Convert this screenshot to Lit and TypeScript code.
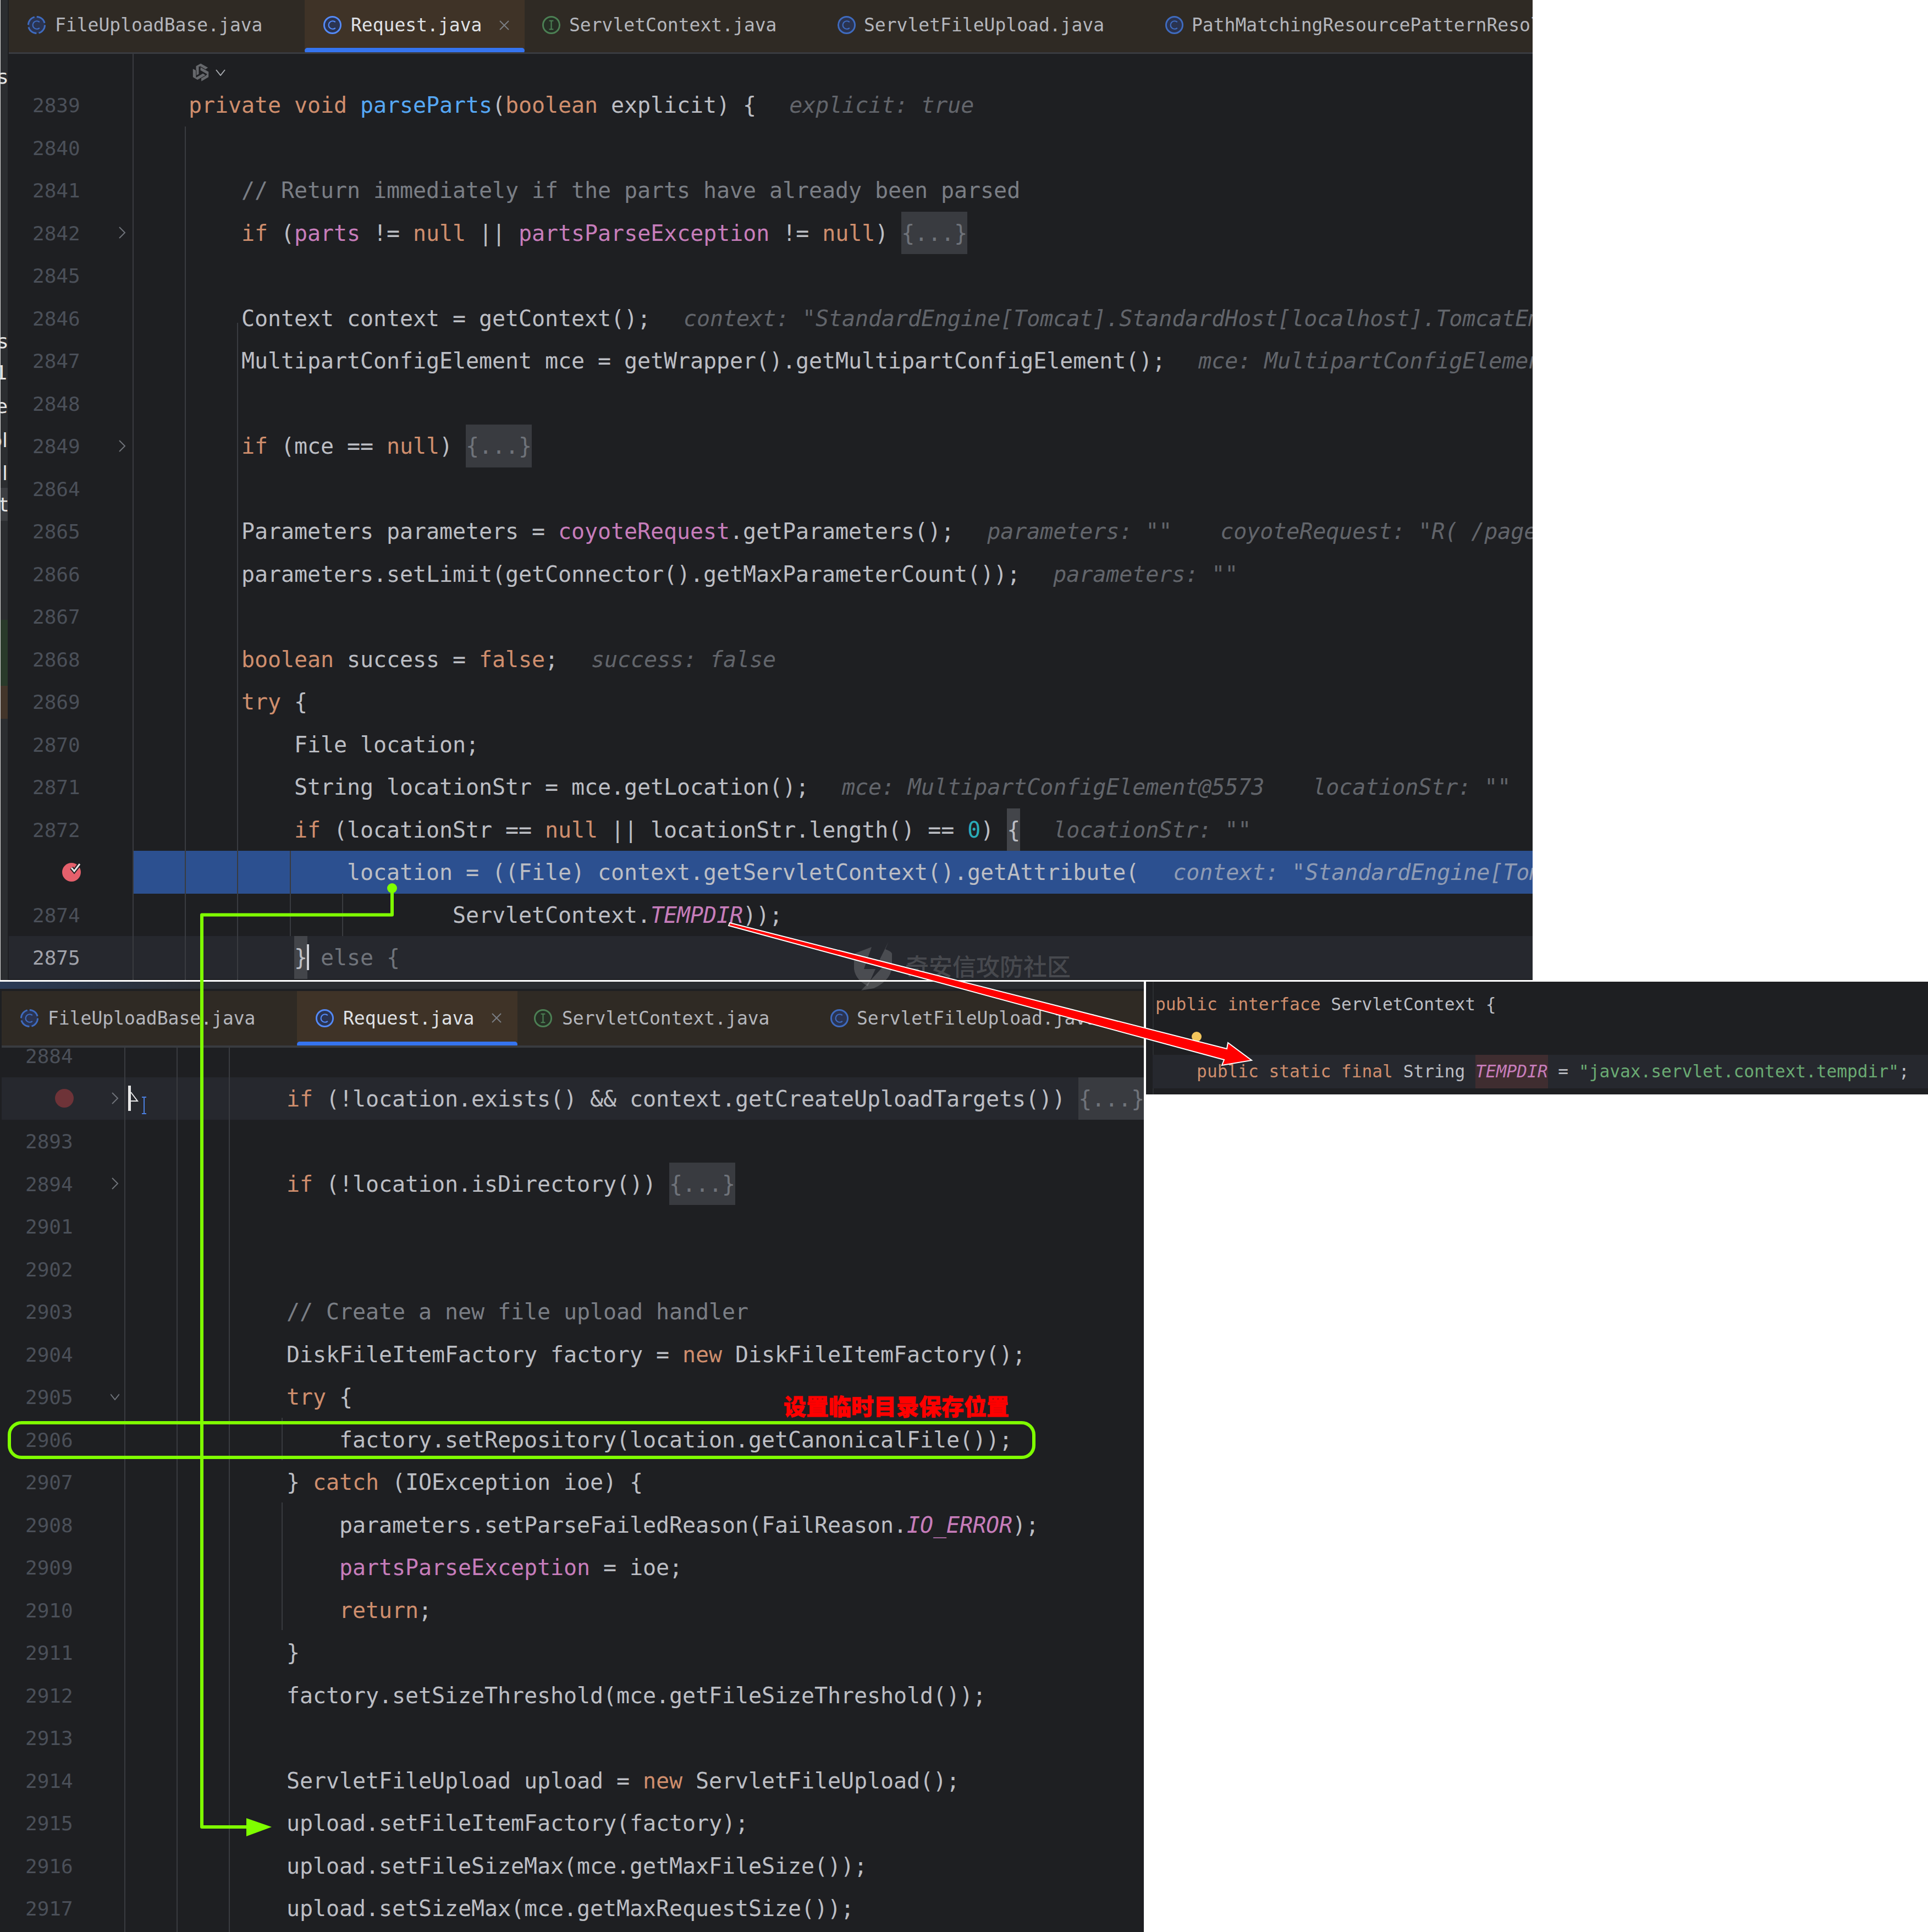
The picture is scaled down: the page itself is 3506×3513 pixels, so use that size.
import { LitElement, html, css, svg } from "lit";
import { customElement } from "lit/decorators.js";

type Seg = [string, string];
interface Row { n?: string; fold?: "r" | "d"; kind?: "sel" | "cur"; bp?: "on" | "off"; segs?: Seg[]; }
interface Guide { x: number; top: number; h: number; }

const t = (s: string): Seg => ["", s];
const k = (s: string): Seg => ["k", s];
const f = (s: string): Seg => ["f", s];
const h = (s: string): Seg => ["h", s];
const h2 = (s: string): Seg => ["h h2", s];
const c = (s: string): Seg => ["c", s];
const fo = (): Seg => ["fo", "{...}"];

const TOP: Row[] = [
  { n: "2839", segs: [k("private void "), ["m", "parseParts"], t("("), k("boolean"), t(" explicit) {"), h("explicit: true")] },
  { n: "2840" },
  { n: "2841", segs: [c("    // Return immediately if the parts have already been parsed")] },
  { n: "2842", fold: "r", segs: [t("    "), k("if"), t(" ("), f("parts"), t(" != "), k("null"), t(" || "), f("partsParseException"), t(" != "), k("null"), t(") "), fo()] },
  { n: "2845" },
  { n: "2846", segs: [t("    Context context = getContext();"), h('context: "StandardEngine[Tomcat].StandardHost[localhost].TomcatEmbeddedContext[]"')] },
  { n: "2847", segs: [t("    MultipartConfigElement mce = getWrapper().getMultipartConfigElement();"), h("mce: MultipartConfigElement@5573")] },
  { n: "2848" },
  { n: "2849", fold: "r", segs: [t("    "), k("if"), t(" (mce == "), k("null"), t(") "), fo()] },
  { n: "2864" },
  { n: "2865", segs: [t("    Parameters parameters = "), f("coyoteRequest"), t(".getParameters();"), h('parameters: ""'), h2('coyoteRequest: "R( /page/upload )"')] },
  { n: "2866", segs: [t("    parameters.setLimit(getConnector().getMaxParameterCount());"), h('parameters: ""')] },
  { n: "2867" },
  { n: "2868", segs: [t("    "), k("boolean"), t(" success = "), k("false"), t(";"), h("success: false")] },
  { n: "2869", segs: [t("    "), k("try"), t(" {")] },
  { n: "2870", segs: [t("        File location;")] },
  { n: "2871", segs: [t("        String locationStr = mce.getLocation();"), h("mce: MultipartConfigElement@5573"), h2('locationStr: ""')] },
  { n: "2872", segs: [t("        "), k("if"), t(" (locationStr == "), k("null"), t(" || locationStr.length() == "), ["n", "0"], t(") "), ["br", "{"], h('locationStr: ""')] },
  { kind: "sel", bp: "on", segs: [t("            location = ((File) context.getServletContext().getAttribute("), ["h hs", 'context: "StandardEngine[Tomcat].StandardHost[localhost]"']] },
  { n: "2874", segs: [t("                    ServletContext."), ["fi", "TEMPDIR"], t("));")] },
  { n: "2875", kind: "cur", segs: [t("        "), ["br ca", "}"], ["dim", " else {"]] },
];

const BOTTOM: Row[] = [
  { n: "2884" },
  { kind: "cur", bp: "off", fold: "r", segs: [k("if"), t(" (!location.exists() && context.getCreateUploadTargets()) "), fo()] },
  { n: "2893" },
  { n: "2894", fold: "r", segs: [k("if"), t(" (!location.isDirectory()) "), fo()] },
  { n: "2901" },
  { n: "2902" },
  { n: "2903", segs: [c("// Create a new file upload handler")] },
  { n: "2904", segs: [t("DiskFileItemFactory factory = "), k("new"), t(" DiskFileItemFactory();")] },
  { n: "2905", fold: "d", segs: [k("try"), t(" {")] },
  { n: "2906", segs: [t("    factory.setRepository(location.getCanonicalFile());")] },
  { n: "2907", segs: [t("} "), k("catch"), t(" (IOException ioe) {")] },
  { n: "2908", segs: [t("    parameters.setParseFailedReason(FailReason."), ["fi", "IO_ERROR"], t(");")] },
  { n: "2909", segs: [t("    "), f("partsParseException"), t(" = ioe;")] },
  { n: "2910", segs: [t("    "), k("return"), t(";")] },
  { n: "2911", segs: [t("}")] },
  { n: "2912", segs: [t("factory.setSizeThreshold(mce.getFileSizeThreshold());")] },
  { n: "2913" },
  { n: "2914", segs: [t("ServletFileUpload upload = "), k("new"), t(" ServletFileUpload();")] },
  { n: "2915", segs: [t("upload.setFileItemFactory(factory);")] },
  { n: "2916", segs: [t("upload.setFileSizeMax(mce.getMaxFileSize());")] },
  { n: "2917", segs: [t("upload.setSizeMax(mce.getMaxRequestSize());")] },
];

const GUIDES_TOP: Guide[] = [
  { x: 241, top: 0, h: 1684 },
  { x: 336, top: 132, h: 1552 },
  { x: 431, top: 489, h: 1195 },
  { x: 527, top: 1449, h: 155 },
  { x: 622, top: 1526, h: 78 },
];
const GUIDES_BOTTOM: Guide[] = [
  { x: 226, top: 0, h: 1608 },
  { x: 321, top: 0, h: 1608 },
  { x: 416, top: 0, h: 1608 },
  { x: 512, top: 673, h: 77 },
  { x: 512, top: 827, h: 232 },
];

interface Tab { name: string; w: number; icon: "c" | "cd" | "i"; active?: boolean; pad: number; gap: number; }
const TABS_TOP: Tab[] = [
  { name: "FileUploadBase.java", w: 538, icon: "cd", pad: 33, gap: 16 },
  { name: "Request.java", w: 400, icon: "c", active: true, pad: 33, gap: 16 },
  { name: "ServletContext.java", w: 535, icon: "i", pad: 31, gap: 15 },
  { name: "ServletFileUpload.java", w: 596, icon: "c", pad: 33, gap: 14 },
  { name: "PathMatchingResourcePatternResolver.java", w: 1100, icon: "c", pad: 33, gap: 14 },
];
const TABS_BOTTOM: Tab[] = [
  { name: "FileUploadBase.java", w: 537, icon: "cd", pad: 33, gap: 16 },
  { name: "Request.java", w: 401, icon: "c", active: true, pad: 33, gap: 16 },
  { name: "ServletContext.java", w: 535, icon: "i", pad: 29, gap: 17 },
  { name: "ServletFileUpload.java", w: 700, icon: "c", pad: 33, gap: 14 },
];

const STRIP: { h: number; pre?: string; text?: string; cls?: string }[] = [
  { h: 121 }, { h: 36, text: "s" }, { h: 445 },
  { h: 36, text: "s" }, { h: 21 },
  { h: 36, pre: "o", text: "1" }, { h: 25 },
  { h: 36, text: "e" }, { h: 26 },
  { h: 36, text: "pl" }, { h: 24 },
  { h: 36, pre: "u", text: "l" }, { h: 9 },
  { h: 60, text: "st", cls: "hi" }, { h: 180 },
  { h: 120, cls: "gr" }, { h: 60, cls: "br" },
];

@customElement("app-root")
export class AppRoot extends LitElement {
  static styles = css`
    :host { display: block; position: relative; width: 3506px; height: 3513px; background: #fff; overflow: hidden; font-family: "DejaVu Sans Mono", "Liberation Mono", monospace; }
    .panel { background: #1e1f22; overflow: hidden; box-sizing: border-box; }
    .p1 { width: 2787px; height: 1782px; display: flex; }
    .lower { display: flex; gap: 4px; margin-top: 3px; align-items: flex-start; }
    .p2 { width: 2080px; height: 1728px; padding-left: 3px; display: flex; flex-direction: column; }
    .p3 { width: 1422px; height: 205px; padding-left: 12px; }

    .strip { width: 16px; height: 100%; flex: none; box-sizing: border-box; border-left: 1px solid #d8d8d8; padding-right: 2px; }
    .strip-in { background: #2b2d30; height: 100%; display: flex; flex-direction: column; overflow: hidden; }
    .si { flex: none; display: flex; justify-content: flex-end; align-items: center; font: 36px "DejaVu Sans", sans-serif; color: #e6e6e6; white-space: nowrap; overflow: hidden; }
    .si .pre { color: #cf8e6d; }
    .si.hi { background: #3c3e42; }
    .si.gr { background: #293a2a; }
    .si.br { background: #43352a; }

    .main { flex: 1; min-width: 0; display: flex; flex-direction: column; }
    .title { height: 17px; flex: none; box-sizing: border-box; border-bottom: 4px solid #1e1f22; background: linear-gradient(90deg, #2a3a55 0, #2b2d30 420px); margin-left: -3px; }
    .tabs { display: flex; flex: none; background: #2f2a24; box-sizing: border-box; overflow: hidden; }
    .p1 .tabs { height: 98px; border-bottom: 3px solid #393b40; }
    .p2 .tabs { height: 103px; border-bottom: 4px solid #393b40; }
    .tab { position: relative; flex: none; display: flex; align-items: center; box-sizing: border-box; font-size: 33px; color: #b4b6bc; white-space: pre; height: calc(100% + 4px); margin-bottom: -4px; }
    .p1 .tab { padding-bottom: 8px; }
    .p2 .tab { padding-bottom: 5px; }
    .tab.on { background: #3f3327; color: #dfe1e5; }
    .tab.on::after { content: ""; position: absolute; left: 0; right: 0; bottom: 2px; height: 10px; border-radius: 5px; background: #3574f0; }
    .p2 .tab.on::after { bottom: 1px; }
    .ti { width: 35px; height: 35px; flex: none; display: block; }
    .tx { width: 20px; height: 18px; flex: none; margin-left: 15px; display: block; }

    .body { position: relative; flex: 1; min-height: 0; overflow: hidden; }
    .p1 .head { height: 54px; box-sizing: border-box; padding-top: 14px; display: flex; align-items: center; padding-left: 331px; gap: 9px; }
    .head .cfg { width: 36px; height: 36px; display: block; }
    .head .chev { width: 18px; height: 12px; display: block; }
    .p2 .rows { margin-top: -24px; }
    .row { display: flex; height: 77.5px; }
    .row.cur { background: #26282e; }
    .gut { flex: none; display: flex; align-items: center; height: 100%; }
    .p1 .gut { width: 225px; }
    .p2 .gut { width: 223px; }
    .num { flex: none; width: 130px; box-sizing: border-box; padding-left: 43px; font-size: 36px; color: #4b5059; line-height: 79px; height: 77.5px; }
    .cur .num { color: #a1a3ab; }
    .bp { width: 130px; flex: none; padding-left: 96px; box-sizing: border-box; }
    .bp svg { display: block; width: 36px; height: 36px; }
    .chv { width: 16px; height: 24px; margin-left: 68px; display: block; flex: none; }
    .code { flex: 1; min-width: 0; white-space: pre; overflow: hidden; font-size: 40px; line-height: 79px; letter-spacing: -0.08px; color: #bcbec4; }
    .p1 .code { padding-left: 102px; }
    .p2 .code { padding-left: 295px; }
    .sel .code { background: #2c5090; margin-left: 1px; padding-left: 101px; }
    .k { color: #cf8e6d; }
    .m { color: #56a8f5; }
    .f { color: #c77dbb; }
    .fi { color: #c77dbb; font-style: italic; }
    .n { color: #2aacb8; }
    .c { color: #7a7e85; }
    .dim { color: #6f737a; }
    .h { color: #62656b; font-style: italic; margin-left: 60px; }
    .h2 { margin-left: 88px; }
    .hs { color: #8f9bb3; margin-left: 62px; }
    .fo { display: inline-block; background: #393b40; color: #6f737a; height: 77.5px; }
    .br { display: inline-block; background: #43454a; height: 77.5px; position: relative; }
    .ca::after { content: ""; position: absolute; right: -3px; top: 15px; height: 47px; width: 4px; background: #ced0d6; }
    .guide { position: absolute; width: 2px; background: #393b40; }

    .p3 .in { border-left: 2px solid #2b2d30; height: 100%; padding-top: 11px; box-sizing: border-box; font-size: 31.2px; line-height: 61px; color: #bcbec4; position: relative; }
    .p3 .ln { height: 61px; white-space: pre; padding-left: 5px; margin-left: -2px; }
    .p3 .ln.cur { background: #26282e; }
    .p3 .hl { display: inline-block; height: 61px; background: #3f2d30; color: #c77dbb; font-style: italic; }
    .p3 .s { color: #6aab73; }
    .bulb { position: absolute; left: 69px; top: 91px; width: 18px; height: 18px; border-radius: 50%; background: #f2c55c; }

    .wm { position: absolute; left: 1646px; top: 1727px; font: 500 43px/56px "Noto Sans CJK SC", sans-serif; color: rgba(255,255,255,.17); white-space: pre; }
    .note { position: absolute; left: 1425px; top: 2528px; font: 900 41px/54px "Noto Sans CJK SC", sans-serif; color: #f00; -webkit-text-stroke: 0.8px #f00; white-space: pre; }
    .over { position: absolute; left: 0; top: 0; width: 3506px; height: 3513px; display: block; pointer-events: none; }
  `;

  private tabIcon(kind: string, active?: boolean) {
    if (kind === "i") {
      return html`<svg class="ti" viewBox="0 0 36 36"><circle cx="18" cy="18" r="15.5" fill="#262e24" stroke="#4c8054" stroke-width="3"/><path d="M14 10h8M18 10v16M14 26h8" fill="none" stroke="#4c8054" stroke-width="2.2"/></svg>`;
    }
    const col = active ? "#548af7" : "#3f6bbf";
    const dash = kind === "cd" ? "20 4.3" : "none";
    return html`<svg class="ti" viewBox="0 0 36 36"><circle cx="18" cy="18" r="15.5" fill="#2a3350" stroke=${col} stroke-width="3" stroke-dasharray=${dash}/><path d="M23.5 12.5A7.5 7.5 0 1 0 23.5 23.5" fill="none" stroke=${col} stroke-width="2.2"/></svg>`;
  }

  private tabs(list: Tab[]) {
    return html`<div class="tabs">${list.map(
      (x) => html`<div class="tab ${x.active ? "on" : ""}" style="width:${x.w}px;padding-left:${x.pad}px;gap:${x.gap}px">
        ${this.tabIcon(x.icon, x.active)}<span>${x.name}</span>
        ${x.active ? html`<svg class="tx" viewBox="0 0 20 18"><path d="M2 1L18 17M18 1L2 17" stroke="#7a7e85" stroke-width="2" fill="none"/></svg>` : ""}
      </div>`
    )}</div>`;
  }

  private bp(state: "on" | "off") {
    if (state === "off") {
      return html`<div class="bp"><svg viewBox="0 0 36 36"><circle cx="18" cy="18" r="17" fill="#6e3338"/></svg></div>`;
    }
    return html`<div class="bp"><svg viewBox="0 0 36 36"><circle cx="18" cy="18" r="17" fill="#e5606c"/><path d="M18 10L23 16L33 3" fill="none" stroke="#1e1f22" stroke-width="7"/><path d="M18 10L23 16L33 3" fill="none" stroke="#e8e8e8" stroke-width="3"/></svg></div>`;
  }

  private row(r: Row) {
    return html`<div class="row ${r.kind ?? ""}">
      <div class="gut">
        ${r.bp ? this.bp(r.bp) : html`<div class="num">${r.n}</div>`}
        ${r.fold === "r" ? html`<svg class="chv" viewBox="0 0 16 24"><path d="M3 2L13 12L3 22" fill="none" stroke="#6f737a" stroke-width="2"/></svg>` : ""}
        ${r.fold === "d" ? html`<svg class="chv" viewBox="0 0 16 24"><path d="M0 7L8 17L16 7" fill="none" stroke="#6f737a" stroke-width="2"/></svg>` : ""}
      </div>
      <div class="code">${(r.segs ?? []).map(([cl, s]) => html`<span class=${cl}>${s}</span>`)}</div>
    </div>`;
  }

  private guides(list: Guide[]) {
    return list.map((g) => html`<div class="guide" style="left:${g.x}px;top:${g.top}px;height:${g.h}px"></div>`);
  }

  render() {
    const blade = "M18 1L32 9L26 13L15 7L15 21L9 24L9 6Z";
    return html`
      <div class="panel p1">
        <div class="strip"><div class="strip-in">
          ${STRIP.map((s) => html`<div class="si ${s.cls ?? ""}" style="height:${s.h}px">${s.pre ? html`<span class="pre">${s.pre}</span>` : ""}${s.text ?? ""}</div>`)}
        </div></div>
        <div class="main">
          ${this.tabs(TABS_TOP)}
          <div class="body">
            <div class="head">
              <svg class="cfg" viewBox="0 0 36 36">
                <g fill="#66686c" stroke="#1e1f22" stroke-width="1">
                  <path d=${blade}/><path d=${blade} transform="rotate(120 18 18)"/><path d=${blade} transform="rotate(240 18 18)"/>
                </g>
              </svg>
              <svg class="chev" viewBox="0 0 18 12"><path d="M1 1L9 11L17 1" fill="none" stroke="#a8abb0" stroke-width="2"/></svg>
            </div>
            <div class="rows">${TOP.map((r) => this.row(r))}</div>
            ${this.guides(GUIDES_TOP.map((g) => ({ ...g, x: g.x - 16 })))}
          </div>
        </div>
      </div>
      <div class="lower">
        <div class="panel p2">
          <div class="title"></div>
          ${this.tabs(TABS_BOTTOM)}
          <div class="body">
            <div class="rows">${BOTTOM.map((r) => this.row(r))}</div>
            ${this.guides(GUIDES_BOTTOM.map((g) => ({ ...g, x: g.x - 3 })))}
          </div>
        </div>
        <div class="panel p3">
          <div class="in">
            <div class="ln"><span class="k">public interface</span> ServletContext {</div>
            <div class="ln"></div>
            <div class="ln cur">    <span class="k">public static final</span> String <span class="hl">TEMPDIR</span> = <span class="s">"javax.servlet.context.tempdir"</span>;</div>
            <div class="bulb"></div>
          </div>
        </div>
      </div>
      <div class="wm">奇安信攻防社区</div>
      <div class="note">设置临时目录保存位置</div>
      <svg class="over" viewBox="0 0 3506 3513">
        ${svg`
          <g fill="#ffffff" fill-opacity=".17">
            <path d="M1585 1722L1556 1733Q1553 1735 1553 1742L1553 1762Q1556 1782 1578 1793L1592 1762L1571 1762Z"/>
            <path d="M1616 1712L1597 1750L1611 1752L1566 1801L1589 1797Q1618 1784 1622 1760L1622 1734Q1621 1730 1610 1726Z"/>
          </g>
          <g fill="none" stroke="#7fff00" stroke-width="6">
            <path d="M713 1615V1663.5H367V3322H450" stroke-linejoin="round"/>
            <rect x="17" y="2587" width="1863" height="63" rx="22" ry="22"/>
          </g>
          <circle cx="713" cy="1615" r="9" fill="#7fff00"/>
          <polygon points="448,3306 494,3322 448,3339" fill="#7fff00"/>
          <rect x="233" y="1974" width="5" height="46" fill="#e8e8e8"/>
          <path d="M238 1986L250 2002H238" fill="none" stroke="#e8e8e8" stroke-width="2"/>
          <path d="M258 1995H266M262 1995V2025M258 2025H266" fill="none" stroke="#4a7fe0" stroke-width="2"/>
          <polygon points="1327,1678 2231,1907 2233,1896 2276,1928 2222,1937 2226,1927 1325,1683" fill="#ff0000" stroke="#ffffff" stroke-width="2" stroke-linejoin="miter"/>
        `}
      </svg>
    `;
  }
}
